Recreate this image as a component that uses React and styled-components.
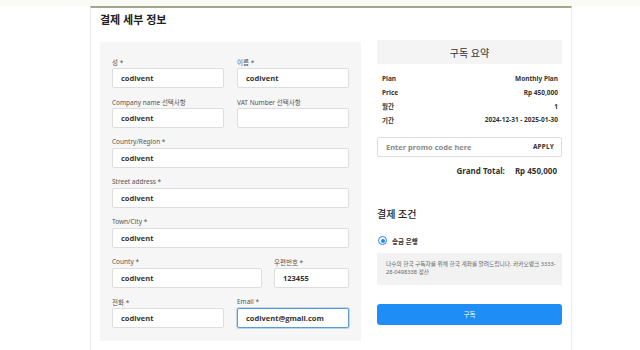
import styled, { createGlobalStyle } from 'styled-components';

const GlobalStyle = createGlobalStyle`
  html, body {
    margin: 0;
    padding: 0;
    background: #ffffff;
  }
  body {
    font-family: "Noto Sans", "Noto Sans CJK KR", sans-serif;
    color: #333;
  }
`;

const Page = styled.div`
  width: 640px;
  height: 350px;
  overflow: hidden;
  padding-top: 6px;
  box-sizing: border-box;
  background: linear-gradient(#fbfbf6 0, #fbfbf6 6px, #fff 6px);
`;

const Card = styled.div`
  margin-left: 90px;
  width: 482px;
  box-sizing: border-box;
  border-top: 2px solid #a3a58c;
  border-left: 1px solid #ececec;
  border-right: 1px solid #ececec;
  background: #fff;
  padding: 0 9px;
  height: 400px;
`;

const Title = styled.h2`
  margin: 4px 0 16px 0;
  height: 14px;
  display: flex;
  align-items: center;
  font-size: 11px;
  font-weight: 700;
  color: #222;
`;

const Columns = styled.div`
  display: flex;
  align-items: flex-start;
  gap: 16px;
`;

const FormPanel = styled.div`
  width: 261px;
  box-sizing: border-box;
  background: #f6f6f6;
  padding: 13px 12px 13px 12px;
  display: flex;
  flex-direction: column;
  gap: 7px;
`;

const Row = styled.div`
  display: grid;
  grid-template-columns: ${p => p.$cols || '1fr'};
  column-gap: ${p => p.$gap || '13px'};
`;

const Field = styled.div`
  display: flex;
  flex-direction: column;
`;

const Label = styled.label`
  font-size: 6.5px;
  color: #555;
  height: 13px;
  display: flex;
  align-items: center;
  white-space: nowrap;
`;

const Input = styled.input`
  box-sizing: border-box;
  width: 100%;
  height: 20px;
  margin: 0;
  border: 1px solid ${p => (p.$focus ? '#5b9bd5' : '#dddddd')};
  box-shadow: ${p => (p.$focus ? '0 0 0 1px rgba(91,155,213,0.35)' : 'none')};
  border-radius: 2px;
  background: #fff;
  padding: 0 8px;
  font-family: "Open Sans", "Noto Sans", sans-serif;
  font-size: 7.5px;
  font-weight: 700;
  color: #333;
  outline: none;
`;

const Side = styled.div`
  width: 185px;
  display: flex;
  flex-direction: column;
  margin-top: -2px;
`;

const SummaryHead = styled.div`
  height: 24px;
  background: #f4f4f4;
  display: flex;
  align-items: center;
  justify-content: center;
  font-size: 10px;
  color: #333;
`;

const SummaryList = styled.div`
  padding: 8px 4px 10px 5px;
  display: flex;
  flex-direction: column;
`;

const SummaryRow = styled.div`
  height: 13.7px;
  display: flex;
  align-items: center;
  justify-content: space-between;
  font-size: 6.5px;
  font-weight: 700;
  color: #333;
`;

const Promo = styled.div`
  height: 20px;
  box-sizing: border-box;
  border: 1px solid #dcdcdc;
  border-radius: 2px;
  display: flex;
  align-items: center;
  justify-content: space-between;
  padding: 0 7px 0 8px;
  font-size: 7.5px;
  font-weight: 700;
`;

const PromoHint = styled.span`
  color: #8a8a8a;
`;

const ApplyButton = styled.span`
  font-size: 6.5px;
  color: #333;
  letter-spacing: 0.2px;
`;

const GrandTotal = styled.div`
  height: 28px;
  display: flex;
  align-items: center;
  justify-content: flex-end;
  gap: 10px;
  padding-right: 5px;
  font-size: 8px;
  font-weight: 700;
  color: #333;
`;

const SectionTitle = styled.h3`
  margin: 22px 0 0 0;
  height: 14px;
  display: flex;
  align-items: center;
  font-size: 10px;
  font-weight: 500;
  color: #222;
`;

const RadioRow = styled.div`
  margin-top: 14px;
  height: 12px;
  display: flex;
  align-items: center;
  gap: 5px;
  padding-left: 1px;
  font-size: 6.5px;
  font-weight: 700;
  color: #333;
`;

const RadioDot = styled.span`
  width: 9px;
  height: 9px;
  box-sizing: border-box;
  border-radius: 50%;
  border: 1.5px solid #1e88f0;
  display: flex;
  align-items: center;
  justify-content: center;
  &::after {
    content: '';
    width: 4px;
    height: 4px;
    border-radius: 50%;
    background: #1e88f0;
  }
`;

const InfoBox = styled.div`
  margin-top: 6px;
  height: 32px;
  box-sizing: border-box;
  background: #f2f2f2;
  padding: 7px 2px 0 9px;
  font-size: 5.7px;
  line-height: 8.5px;
  color: #666;
  word-break: keep-all;
`;

const SubmitButton = styled.button`
  margin-top: 19px;
  height: 21px;
  border: none;
  border-radius: 3px;
  background: #1e8df5;
  color: #fff;
  font-family: "Noto Sans", "Noto Sans CJK KR", sans-serif;
  font-size: 6.5px;
  cursor: pointer;
`;

const summary = [
  ['Plan', 'Monthly Plan'],
  ['Price', 'Rp 450,000'],
  ['월간', '1'],
  ['기간', '2024-12-31 - 2025-01-30'],
];

function App() {
  return (
    <Page>
      <GlobalStyle />
      <Card>
        <Title>결제 세부 정보</Title>
        <Columns>
          <FormPanel>
            <Row $cols="1fr 1fr">
              <Field>
                <Label>성 *</Label>
                <Input readOnly value="codivent" />
              </Field>
              <Field>
                <Label>이름 *</Label>
                <Input readOnly value="codivent" />
              </Field>
            </Row>
            <Row $cols="1fr 1fr">
              <Field>
                <Label>Company name 선택사항</Label>
                <Input readOnly value="codivent" />
              </Field>
              <Field>
                <Label>VAT Number 선택사항</Label>
                <Input readOnly value="" />
              </Field>
            </Row>
            <Field>
              <Label>Country/Region *</Label>
              <Input readOnly value="codivent" />
            </Field>
            <Field>
              <Label>Street address *</Label>
              <Input readOnly value="codivent" />
            </Field>
            <Field>
              <Label>Town/City *</Label>
              <Input readOnly value="codivent" />
            </Field>
            <Row $cols="150px 1fr" $gap="12px">
              <Field>
                <Label>County *</Label>
                <Input readOnly value="codivent" />
              </Field>
              <Field>
                <Label>우편번호 *</Label>
                <Input readOnly value="123455" />
              </Field>
            </Row>
            <Row $cols="1fr 1fr">
              <Field>
                <Label>전화 *</Label>
                <Input readOnly value="codivent" />
              </Field>
              <Field>
                <Label>Email *</Label>
                <Input readOnly $focus value="codivent@gmail.com" />
              </Field>
            </Row>
          </FormPanel>

          <Side>
            <SummaryHead>구독 요약</SummaryHead>
            <SummaryList>
              {summary.map(([k, v]) => (
                <SummaryRow key={k}>
                  <span>{k}</span>
                  <span>{v}</span>
                </SummaryRow>
              ))}
            </SummaryList>
            <Promo>
              <PromoHint>Enter promo code here</PromoHint>
              <ApplyButton>APPLY</ApplyButton>
            </Promo>
            <GrandTotal>
              <span>Grand Total:</span>
              <span>Rp 450,000</span>
            </GrandTotal>
            <SectionTitle>결제 조건</SectionTitle>
            <RadioRow>
              <RadioDot />
              <span>송금 은행</span>
            </RadioRow>
            <InfoBox>
              다수의 한국 구독자를 위해 한국 계좌를 알려드립니다. 카카오뱅크 3333-<wbr />28-0498338 정산
            </InfoBox>
            <SubmitButton>구독</SubmitButton>
          </Side>
        </Columns>
      </Card>
    </Page>
  );
}

export default App;
